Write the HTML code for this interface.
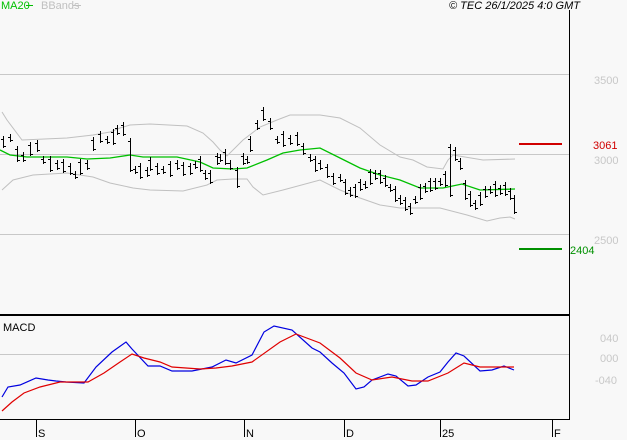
<!DOCTYPE html>
<html><head><meta charset="utf-8"><style>
html,body{margin:0;padding:0;background:#f8f8f8;width:627px;height:440px;overflow:hidden}
svg{display:block}
text{font-family:"Liberation Sans",sans-serif;font-size:11px}
</style></head><body>
<svg width="627" height="440" viewBox="0 0 627 440" shape-rendering="crispEdges">
<rect width="627" height="440" fill="#f8f8f8"/>
<g stroke="#c8c8c8" stroke-width="1">
<line x1="0" y1="74.5" x2="569" y2="74.5"/>
<line x1="0" y1="154.5" x2="569" y2="154.5"/>
<line x1="0" y1="234.5" x2="569" y2="234.5"/>
<line x1="0" y1="354.5" x2="569" y2="354.5"/>
</g>
<g fill="none" stroke="#c0c0c0" stroke-width="1" shape-rendering="auto">
<polyline points="2,112 7,120 22,140 67,138 93,135 110,132 120,128 130,125 150,124 187,126 203,133 213,142 220,150 227,156 243,140 260,127 277,120 290,115 320,115 340,118 360,128 380,145 400,157 413,160 427,167 443,169 448,160 453,155 483,160 515,159"/>
<polyline points="2,190 13,180 33,175 67,173 93,177 110,183 133,188 150,190 183,191 207,185 217,180 233,179 247,179 253,187 263,195 283,190 320,180 340,190 360,198 380,205 400,208 440,208 467,215 487,221 500,218 510,217 515,219"/>
</g>
<polyline fill="none" stroke="#00c000" stroke-width="1.3" shape-rendering="auto" points="0,150 10,155 27,157 43,157 67,157 87,159 110,158 130,155 143,157 177,157 200,162 213,168 233,169 247,168 267,160 283,153 300,150 320,148 340,158 360,168 380,175 400,180 420,188 443,188 462,184 480,190 515,189"/>
<path fill="none" stroke="#000" stroke-width="1" d="
M3.5 136V148M1 139.5H3.5M3.5 146.5H6
M10.5 134V142M8 137.5H10.5M10.5 140.5H13
M17.5 146V162M15 149.5H17.5M17.5 160.5H20
M23.5 152V162M21 155.5H23.5M23.5 160.5H26
M30.5 142V156M28 145.5H30.5M30.5 154.5H33
M37.5 140V152M35 143.5H37.5M37.5 150.5H40
M43.5 156V164M41 159.5H43.5M43.5 162.5H46
M50.5 156V172M48 159.5H50.5M50.5 170.5H53
M57.5 160V170M55 163.5H57.5M57.5 168.5H60
M63.5 159V173M61 162.5H63.5M63.5 171.5H66
M70.5 163V175M68 166.5H70.5M70.5 173.5H73
M75.5 171V179M73 174.5H75.5M75.5 177.5H78
M80.5 159V175M78 162.5H80.5M80.5 173.5H83
M87.5 160V170M85 163.5H87.5M87.5 168.5H90
M93.5 137V151M91 140.5H93.5M93.5 149.5H96
M100.5 131V143M98 134.5H100.5M100.5 141.5H103
M107.5 136V144M105 139.5H107.5M107.5 142.5H110
M113.5 129V145M111 132.5H113.5M113.5 143.5H116
M117.5 125V135M115 128.5H117.5M117.5 133.5H120
M123.5 122V136M121 125.5H123.5M123.5 134.5H126
M130.5 138V172M128 141.5H130.5M130.5 170.5H133
M135.5 166V174M133 169.5H135.5M135.5 172.5H138
M140.5 163V179M138 166.5H140.5M140.5 177.5H143
M147.5 167V177M145 170.5H147.5M147.5 175.5H150
M150.5 157V171M148 160.5H150.5M150.5 169.5H153
M157.5 163V175M155 166.5H157.5M157.5 173.5H160
M163.5 166V174M161 169.5H163.5M163.5 172.5H166
M170.5 161V177M168 164.5H170.5M170.5 175.5H173
M177.5 160V170M175 163.5H177.5M177.5 168.5H180
M183.5 162V176M181 165.5H183.5M183.5 174.5H186
M190.5 163V175M188 166.5H190.5M190.5 173.5H193
M195.5 161V169M193 164.5H195.5M195.5 167.5H198
M200.5 156V172M198 159.5H200.5M200.5 170.5H203
M205.5 170V180M203 173.5H205.5M205.5 178.5H208
M210.5 170V184M208 173.5H210.5M210.5 182.5H213
M217.5 153V165M215 156.5H217.5M217.5 163.5H220
M220.5 154V162M218 157.5H220.5M220.5 160.5H223
M225.5 149V165M223 152.5H225.5M225.5 163.5H228
M230.5 160V170M228 163.5H230.5M230.5 168.5H233
M237.5 167V188M235 170.5H237.5M237.5 186.5H240
M243.5 153V165M241 156.5H243.5M243.5 163.5H246
M247.5 156V164M245 159.5H247.5M247.5 162.5H250
M250.5 136V152M248 139.5H250.5M250.5 150.5H253
M257.5 120V130M255 123.5H257.5M257.5 128.5H260
M263.5 107V121M261 110.5H263.5M263.5 119.5H266
M270.5 118V130M268 121.5H270.5M270.5 128.5H273
M277.5 136V144M275 139.5H277.5M277.5 142.5H280
M283.5 131V147M281 134.5H283.5M283.5 145.5H286
M290.5 135V145M288 138.5H290.5M290.5 143.5H293
M297.5 132V146M295 135.5H297.5M297.5 144.5H300
M303.5 143V155M301 146.5H303.5M303.5 153.5H306
M310.5 154V162M308 157.5H310.5M310.5 160.5H313
M315.5 156V172M313 159.5H315.5M315.5 170.5H318
M320.5 160V170M318 163.5H320.5M320.5 168.5H323
M327.5 164V178M325 167.5H327.5M327.5 176.5H330
M333.5 173V185M331 176.5H333.5M333.5 183.5H336
M340.5 174V182M338 177.5H340.5M340.5 180.5H343
M345.5 179V195M343 182.5H345.5M345.5 193.5H348
M350.5 187V197M348 190.5H350.5M350.5 195.5H353
M355.5 184V198M353 187.5H355.5M355.5 196.5H358
M360.5 179V191M358 182.5H360.5M360.5 189.5H363
M365.5 181V189M363 184.5H365.5M365.5 187.5H368
M370.5 169V185M368 172.5H370.5M370.5 183.5H373
M375.5 170V180M373 173.5H375.5M375.5 178.5H378
M380.5 170V184M378 173.5H380.5M380.5 182.5H383
M385.5 175V187M383 178.5H385.5M385.5 185.5H388
M390.5 184V192M388 187.5H390.5M390.5 190.5H393
M395.5 186V202M393 189.5H395.5M395.5 200.5H398
M400.5 195V205M398 198.5H400.5M400.5 203.5H403
M405.5 197V211M403 200.5H405.5M405.5 209.5H408
M410.5 203V215M408 206.5H410.5M410.5 213.5H413
M415.5 196V204M413 199.5H415.5M415.5 202.5H418
M420.5 184V200M418 187.5H420.5M420.5 198.5H423
M425.5 183V193M423 186.5H425.5M425.5 191.5H428
M430.5 178V192M428 181.5H430.5M430.5 190.5H433
M435.5 178V190M433 181.5H435.5M435.5 188.5H438
M440.5 178V186M438 181.5H440.5M440.5 184.5H443
M445.5 171V187M443 174.5H445.5M445.5 185.5H448
M450.5 144V197M448 147.5H450.5M450.5 195.5H453
M455.5 147V161M453 150.5H455.5M455.5 159.5H458
M460.5 158V170M458 161.5H460.5M460.5 168.5H463
M465.5 180V200M463 183.5H465.5M465.5 198.5H468
M470.5 191V207M468 194.5H470.5M470.5 205.5H473
M475.5 200V210M473 203.5H475.5M475.5 208.5H478
M480.5 192V206M478 195.5H480.5M480.5 204.5H483
M485.5 186V198M483 189.5H485.5M485.5 196.5H488
M490.5 186V194M488 189.5H490.5M490.5 192.5H493
M495.5 181V197M493 184.5H495.5M495.5 195.5H498
M500.5 185V195M498 188.5H500.5M500.5 193.5H503
M505.5 182V196M503 185.5H505.5M505.5 194.5H508
M510.5 188V200M508 191.5H510.5M510.5 198.5H513
M514.5 195V214M512 198.5H514.5M514.5 212.5H517"/>
<line x1="519" y1="144" x2="562" y2="144" stroke="#d00000" stroke-width="2"/>
<line x1="519" y1="249" x2="562" y2="249" stroke="#009000" stroke-width="2"/>
<line x1="569.5" y1="10" x2="569.5" y2="419" stroke="#000" stroke-width="1"/>
<line x1="0" y1="315" x2="569" y2="315" stroke="#000" stroke-width="2"/>
<line x1="0" y1="419.5" x2="570" y2="419.5" stroke="#000" stroke-width="1"/>
<g stroke="#000" stroke-width="1">
<line x1="36.5" y1="420" x2="36.5" y2="437"/>
<line x1="135.5" y1="420" x2="135.5" y2="437"/>
<line x1="244.5" y1="420" x2="244.5" y2="437"/>
<line x1="344.5" y1="420" x2="344.5" y2="437"/>
<line x1="440.5" y1="420" x2="440.5" y2="437"/>
<line x1="552.5" y1="420" x2="552.5" y2="437"/>
</g>
<g fill="none" stroke-width="1.2" shape-rendering="auto">
<polyline stroke="#0000e0" points="2,397 8,387 20,385 36,378 48,380 56,381 66,382 84,383 96,367 112,352 126,342 132,349 148,366 160,366 172,371 192,371 212,367 226,360 236,363 252,355 264,332 274,326 292,330 312,348 320,352 332,363 344,373 356,389 364,387 372,380 388,374 396,376 408,386 416,385 428,377 440,372 448,362 456,353 464,356 480,371 492,370 504,366 514,370"/>
<polyline stroke="#e00000" points="2,411 12,402 24,393 40,387 60,382 88,382 104,373 120,362 132,354 144,358 160,362 172,367 200,369 216,368 232,366 252,362 280,342 296,334 320,343 340,358 356,373 372,380 392,377 412,381 428,381 448,373 464,363 480,367 496,367 514,367"/>
</g>
<text x="1" y="9" fill="#00c000" font-size="10">MA20</text>
<line x1="26" y1="5.5" x2="33" y2="5.5" stroke="#00c000"/>
<text x="41" y="9" fill="#c0c0c0" font-size="10">BBands</text>
<line x1="73" y1="5.5" x2="81" y2="5.5" stroke="#c0c0c0"/>
<text x="449" y="9" fill="#000" font-style="italic" font-size="10.5">© TEC 26/1/2025 4:0 GMT</text>
<text x="594" y="84" fill="#c8c8c8">3500</text>
<text x="594" y="164" fill="#c8c8c8">3000</text>
<text x="594" y="244" fill="#c8c8c8">2500</text>
<text x="593" y="149" fill="#d00000">3061</text>
<text x="570" y="254" fill="#009000">2404</text>
<text x="600" y="342" fill="#c8c8c8">040</text>
<text x="600" y="362" fill="#c8c8c8">000</text>
<text x="595" y="384" fill="#c8c8c8">-040</text>
<text x="3" y="331" fill="#000" font-size="10">MACD</text>
<text x="38" y="437" fill="#000">S</text>
<text x="137" y="437" fill="#000">O</text>
<text x="246" y="437" fill="#000">N</text>
<text x="346" y="437" fill="#000">D</text>
<text x="442" y="437" fill="#000">25</text>
<text x="554" y="437" fill="#000">F</text>
</svg>
</body></html>
